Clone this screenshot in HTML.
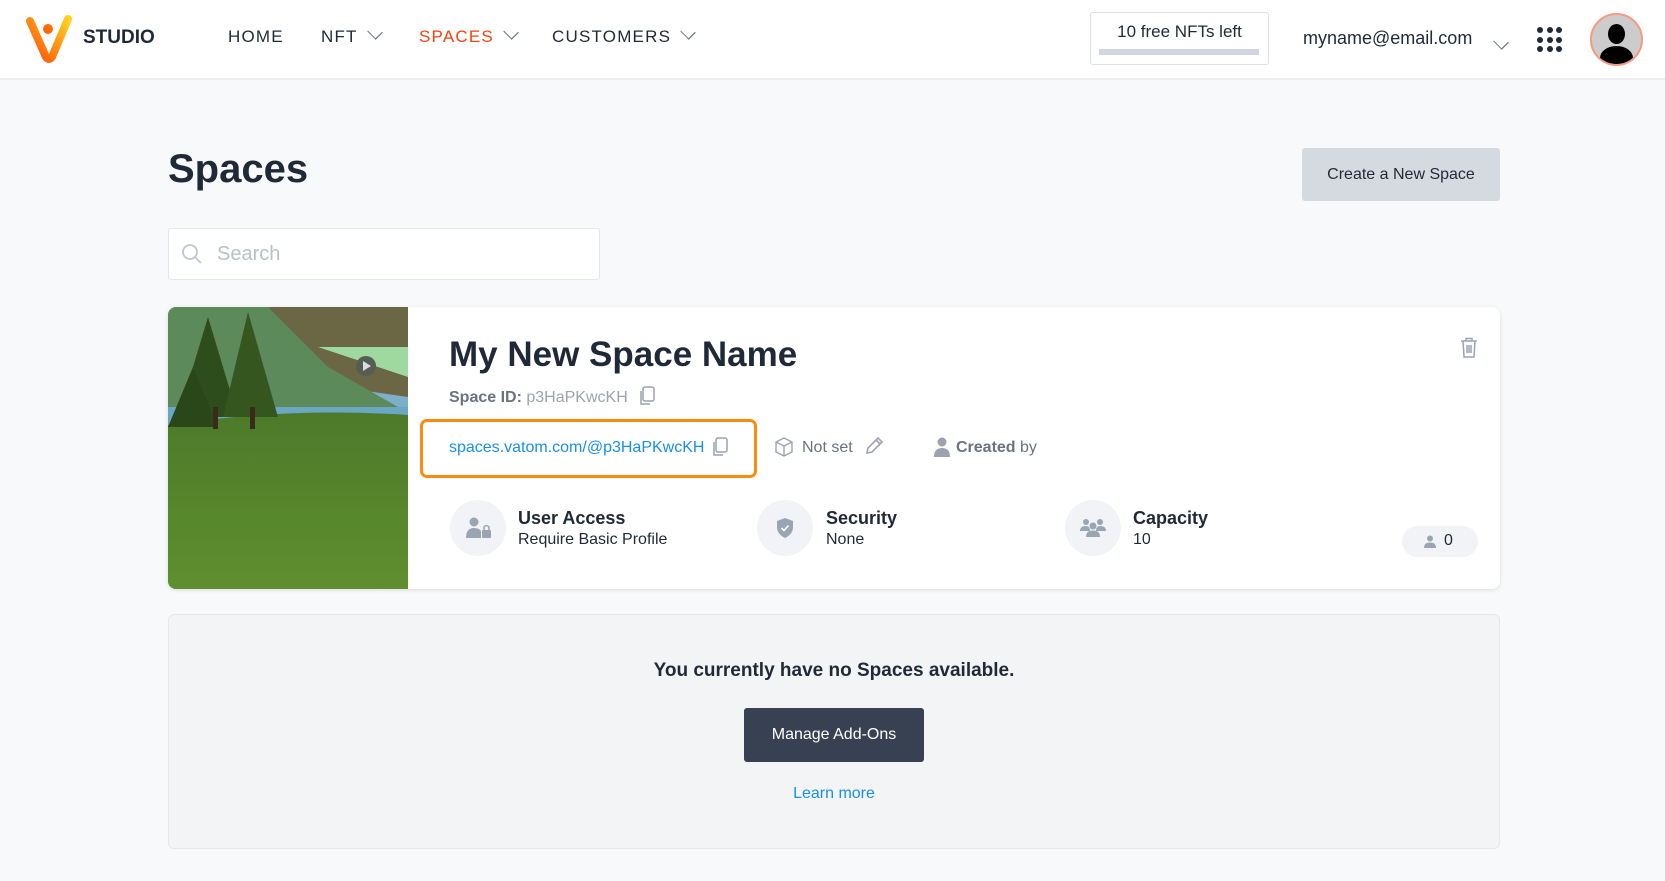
<!DOCTYPE html>
<html><head><meta charset="utf-8"><style>
*{box-sizing:border-box;margin:0;padding:0}
body{width:1665px;height:881px;overflow:hidden;background:#f8f9fb;font-family:"Liberation Sans",sans-serif;color:#1f2937;position:relative}
.abs{position:absolute}
.hdr{left:0;top:0;width:1665px;height:80px;background:#fff;border-bottom:2px solid #eceef1}
.nav{top:27px;font-size:17px;letter-spacing:1.2px;color:#1f2937;font-weight:500}
.chev{display:inline-block;width:10px;height:10px;border-right:1.5px solid #6b7280;border-bottom:1.5px solid #6b7280;transform:rotate(45deg) scaleX(1.2);margin-left:12px;position:relative;top:-5px}
.dot{width:6px;height:6px;border-radius:50%;background:#1f2937}
.circ{width:56px;height:56px;border-radius:50%;background:#f1f3f6}
.lbl{font-size:18px;font-weight:bold;color:#1f2937}
.sub{font-size:16px;color:#1f2937}
</style></head><body>
<div class="abs hdr"></div>
<svg class="abs" style="left:24px;top:15px" width="52" height="48" viewBox="0 0 52 48">
<defs><linearGradient id="g" x1="0" y1="1" x2="1" y2="0"><stop offset="0" stop-color="#ff4d0a"/><stop offset="1" stop-color="#ffd21f"/></linearGradient></defs>
<path d="M6 6 L22 42 Q25 46 28 42 L44 4" fill="none" stroke="url(#g)" stroke-width="8" stroke-linecap="round" stroke-linejoin="round"/>
<circle cx="24" cy="14" r="5" fill="#ff6a0a"/></svg>
<div class="abs" style="left:83px;top:27px;font-size:19px;font-weight:bold;color:#1f2937">STUDIO</div>
<div class="abs nav" style="left:228px">HOME</div>
<div class="abs nav" style="left:321px">NFT<span class="chev"></span></div>
<div class="abs nav" style="left:419px;color:#f2420f">SPACES<span class="chev"></span></div>
<div class="abs nav" style="left:552px">CUSTOMERS<span class="chev"></span></div>
<div class="abs" style="left:1090px;top:12px;width:179px;height:53px;border:1.5px solid #dde1e6;border-radius:3px;background:#fff"></div>
<div class="abs" style="left:1090px;top:22px;width:179px;text-align:center;font-size:17px;color:#1f2937">10 free NFTs left</div>
<div class="abs" style="left:1099px;top:49px;width:160px;height:6px;background:#cfd6df"></div>
<div class="abs" style="left:1303px;top:28px;font-size:18px;color:#1f2937">myname@email.com</div>
<span class="abs chev" style="left:1484px;top:34px"></span>
<div class="abs" style="left:1537px;top:27px;display:grid;grid-template-columns:repeat(3,6px);gap:3.5px">
<div class="dot"></div><div class="dot"></div><div class="dot"></div><div class="dot"></div><div class="dot"></div><div class="dot"></div><div class="dot"></div><div class="dot"></div><div class="dot"></div></div>
<div class="abs" style="left:1590px;top:13px;width:53px;height:53px;border-radius:50%;border:2px solid #f59a80;background:#ccc;overflow:hidden">
<div class="abs" style="left:16px;top:9px;width:17px;height:20px;border-radius:50%;background:#000"></div>
<div class="abs" style="left:8px;top:31px;width:33px;height:24px;border-radius:50% 50% 0 0;background:#000"></div></div>

<div class="abs" style="left:168px;top:147px;font-size:40px;font-weight:bold;color:#1f2937">Spaces</div>
<div class="abs" style="left:1302px;top:148px;width:198px;height:53px;background:#d5d9e0;border-radius:3px;font-size:16px;color:#1f2937;text-align:center;line-height:53px">Create a New Space</div>
<div class="abs" style="left:168px;top:228px;width:432px;height:52px;background:#fff;border:1.5px solid #e3e6ea;border-radius:3px"></div>
<svg class="abs" style="left:181px;top:243px" width="22" height="22" viewBox="0 0 22 22"><circle cx="9" cy="9" r="7" fill="none" stroke="#c0c6cf" stroke-width="1.8"/><path d="M14 14 L20 20" stroke="#c0c6cf" stroke-width="1.8"/></svg>
<div class="abs" style="left:217px;top:243px;font-size:20px;color:#b8c0cb">Search</div>

<div class="abs" style="left:168px;top:307px;width:1332px;height:282px;background:#fff;border-radius:8px;box-shadow:0 1px 4px rgba(0,0,0,.12);overflow:hidden">
<svg width="240" height="282" viewBox="0 0 240 282" style="position:absolute;left:0;top:0">
<defs><linearGradient id="gr" x1="0" y1="0" x2="0" y2="1"><stop offset="0" stop-color="#4d7a2a"/><stop offset="1" stop-color="#5f8f2e"/></linearGradient></defs>
<rect width="240" height="282" fill="#7db0c8"/>
<path d="M0 0 H240 V60 L200 40 L170 0 Z" fill="#7d7a55"/>
<path d="M100 0 L170 80 L240 90 V0 Z" fill="#6b6745"/>
<path d="M0 0 L100 0 L160 60 L230 100 L240 110 L0 120 Z" fill="#5d8a5a"/>
<path d="M150 40 L210 60 L240 70 L240 40 Z" fill="#9fd9a0"/>
<rect y="100" width="240" height="30" fill="#6ba6c2"/>
<path d="M0 118 Q120 100 240 108 V282 H0 Z" fill="url(#gr)"/>
<path d="M40 10 L70 110 L10 110 Z" fill="#2e4d1d"/><path d="M80 5 L110 110 L55 110 Z" fill="#35561f"/><path d="M25 60 L50 120 L0 120 Z" fill="#2a471a"/>
<rect x="45" y="100" width="5" height="22" fill="#3a2a1a"/><rect x="82" y="100" width="5" height="22" fill="#3a2a1a"/>
<circle cx="198" cy="59" r="10" fill="#555e55"/><path d="M195 54 L203 59 L195 64Z" fill="#ddd"/>
</svg>
</div>
<div class="abs" style="left:449px;top:335px;font-size:35px;font-weight:bold;color:#1f2937">My New Space Name</div>
<div class="abs" style="left:449px;top:389px;font-size:16px;color:#9ca3af"><b style="color:#6b7280">Space ID:</b> p3HaPKwcKH</div>
<svg class="abs" style="left:638px;top:386px" width="18" height="20" viewBox="0 0 18 20"><rect x="5" y="1" width="11" height="14" rx="2" fill="none" stroke="#9ca3af" stroke-width="1.5"/><path d="M3 5 V18 H12" fill="none" stroke="#9ca3af" stroke-width="1.5"/></svg>
<div class="abs" style="left:420px;top:419px;width:337px;height:59px;border:3.5px solid #ff8a0d;border-radius:7px"></div>
<div class="abs" style="left:449px;top:439px;font-size:16px;color:#1a8fe6">spaces.vatom.com/@p3HaPKwcKH</div>
<svg class="abs" style="left:711px;top:437px" width="18" height="20" viewBox="0 0 18 20"><rect x="5" y="1" width="11" height="14" rx="2" fill="none" stroke="#9ca3af" stroke-width="1.5"/><path d="M3 5 V18 H12" fill="none" stroke="#9ca3af" stroke-width="1.5"/></svg>
<svg class="abs" style="left:774px;top:437px" width="20" height="20" viewBox="0 0 20 20"><path d="M10 1 L18 5 V15 L10 19 L2 15 V5 Z M2 5 L10 9 L18 5 M10 9 V19" fill="none" stroke="#9ca3af" stroke-width="1.4"/></svg>
<div class="abs" style="left:802px;top:439px;font-size:16px;color:#6b7280">Not set</div>
<svg class="abs" style="left:864px;top:436px" width="20" height="20" viewBox="0 0 20 20"><path d="M3 17 L4 12 L14 2 L18 6 L8 16 Z M12 4 L16 8" fill="none" stroke="#9ca3af" stroke-width="1.6"/></svg>
<svg class="abs" style="left:933px;top:437px" width="18" height="20" viewBox="0 0 18 20"><circle cx="9" cy="5" r="4.5" fill="#9ca3af"/><path d="M1 20 Q1 11 9 11 Q17 11 17 20Z" fill="#9ca3af"/></svg>
<div class="abs" style="left:956px;top:439px;font-size:16px;color:#6b7280"><b>Created</b> by</div>
<svg class="abs" style="left:1460px;top:337px" width="18" height="21" viewBox="0 0 18 21"><path d="M1 4 H17 M6 4 V1.5 H12 V4 M3 4 L4 20 H14 L15 4 M7 8 V16 M9 8 V16 M11 8 V16" fill="none" stroke="#9aa5b4" stroke-width="1.5"/></svg>

<div class="abs circ" style="left:450px;top:500px"></div>
<svg class="abs" style="left:466px;top:517px" width="26" height="22" viewBox="0 0 26 22"><circle cx="8" cy="5" r="4.5" fill="#9aa5b4"/><path d="M0 21 Q0 11 8 11 Q13 11 15 14 V21Z" fill="#9aa5b4"/><rect x="16" y="13" width="9" height="8" rx="1" fill="#9aa5b4"/><path d="M18 13 V10 Q20.5 7 23 10 V13" fill="none" stroke="#9aa5b4" stroke-width="1.5"/></svg>
<div class="abs lbl" style="left:518px;top:508px">User Access</div>
<div class="abs sub" style="left:518px;top:531px">Require Basic Profile</div>
<div class="abs circ" style="left:757px;top:500px"></div>
<svg class="abs" style="left:776px;top:517px" width="18" height="22" viewBox="0 0 18 22"><path d="M9 1 L17 4 V10 Q17 17 9 21 Q1 17 1 10 V4 Z" fill="#9aa5b4"/><path d="M5.5 11 L8 13.5 L12.5 8.5" fill="none" stroke="#fff" stroke-width="1.6"/></svg>
<div class="abs lbl" style="left:826px;top:508px">Security</div>
<div class="abs sub" style="left:826px;top:531px">None</div>
<div class="abs circ" style="left:1065px;top:500px"></div>
<svg class="abs" style="left:1080px;top:518px" width="26" height="20" viewBox="0 0 26 20"><circle cx="6" cy="4" r="3" fill="#9aa5b4"/><circle cx="20" cy="4" r="3" fill="#9aa5b4"/><circle cx="13" cy="8" r="3.5" fill="#9aa5b4"/><path d="M0 13 Q0 8 6 8 Q10 8 10 13Z M16 13 Q16 8 20 8 Q26 8 26 13Z M6 19 Q6 12.5 13 12.5 Q20 12.5 20 19Z" fill="#9aa5b4"/></svg>
<div class="abs lbl" style="left:1133px;top:508px">Capacity</div>
<div class="abs sub" style="left:1133px;top:531px">10</div>
<div class="abs" style="left:1402px;top:526px;width:76px;height:31px;border-radius:16px;background:#f1f3f6"></div>
<svg class="abs" style="left:1424px;top:535px" width="12" height="13" viewBox="0 0 12 13"><circle cx="6" cy="3.5" r="3" fill="#9aa5b4"/><path d="M0 13 Q0 7.5 6 7.5 Q12 7.5 12 13Z" fill="#9aa5b4"/></svg>
<div class="abs" style="left:1444px;top:532px;font-size:16px;color:#1f2937">0</div>

<div class="abs" style="left:168px;top:614px;width:1332px;height:235px;background:#f3f4f6;border:1.5px solid #e5e7eb;border-radius:6px"></div>
<div class="abs" style="left:168px;top:660px;width:1332px;text-align:center;font-size:19px;font-weight:bold;color:#1f2937">You currently have no Spaces available.</div>
<div class="abs" style="left:744px;top:708px;width:180px;height:54px;background:#374151;border-radius:3px;color:#fff;font-size:16px;text-align:center;line-height:54px">Manage Add-Ons</div>
<div class="abs" style="left:168px;top:785px;width:1332px;text-align:center;font-size:16px;color:#1a8fe6">Learn more</div>
</body></html>
